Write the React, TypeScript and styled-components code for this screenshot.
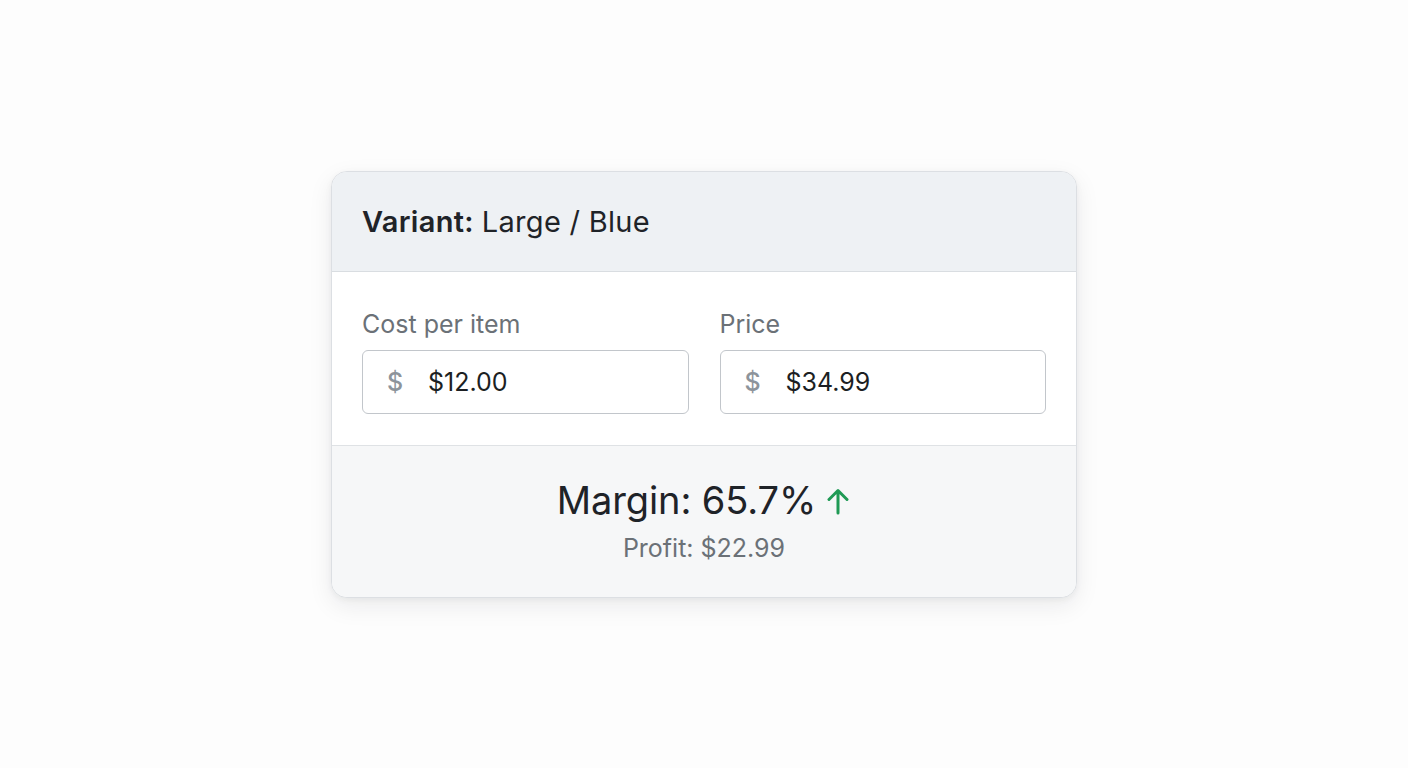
import React from "react";
import styled, { createGlobalStyle } from "styled-components";

const Global = createGlobalStyle`
  html, body { margin: 0; padding: 0; background: #fdfdfd; }
  body { font-family: Inter, "Liberation Sans", Arial, sans-serif; }
`;

const Page = styled.div`
  width: 1408px;
  height: 768px;
  display: flex;
  align-items: center;
  justify-content: center;
`;

const Card = styled.div`
  width: 746px;
  height: 427px;
  box-sizing: border-box;
  border: 1px solid #dcdfe3;
  border-radius: 16px;
  overflow: hidden;
  background: #ffffff;
  box-shadow: 0 8px 24px rgba(20, 30, 40, 0.08), 0 2px 6px rgba(20, 30, 40, 0.05);
  display: flex;
  flex-direction: column;
`;

const Header = styled.div`
  height: 100px;
  box-sizing: border-box;
  background: #eef1f4;
  border-bottom: 1px solid #d9dde1;
  display: flex;
  align-items: center;
  padding: 0 30px;
  font-size: 29px;
  color: #1f2328;
  letter-spacing: 0.3px;
`;

const Bold = styled.span`
  font-weight: 600;
  margin-right: 8px;
`;

const Body = styled.div`
  height: 174px;
  box-sizing: border-box;
  border-bottom: 1px solid #dfe2e5;
  padding: 37px 30px 0;
  display: grid;
  grid-template-columns: 1fr 1fr;
  column-gap: 31px;
`;

const Field = styled.div`
  display: flex;
  flex-direction: column;
`;

const Label = styled.div`
  font-size: 25px;
  color: #6b7177;
  line-height: 30px;
  margin-bottom: 11px;
`;

const InputBox = styled.div`
  height: 64px;
  box-sizing: border-box;
  border: 1.5px solid #c2c6cb;
  border-radius: 6px;
  display: flex;
  align-items: center;
  padding: 0 0 0 24px;
`;

const Prefix = styled.span`
  font-size: 25px;
  color: #8d949b;
  font-weight: 500;
  width: 41px;
`;

const Value = styled.span`
  font-size: 25px;
  color: #1c1f23;
`;

const Footer = styled.div`
  flex: 1;
  background: #f6f7f8;
  display: flex;
  flex-direction: column;
  align-items: center;
  padding-top: 30px;
`;

const MarginLine = styled.div`
  display: flex;
  align-items: center;
  font-size: 38px;
  color: #1f2328;
  letter-spacing: -0.1px;
  line-height: 48px;
`;

const Arrow = styled.svg`
  margin-left: 9px;
  margin-top: 2px;
`;

const Profit = styled.div`
  font-size: 25px;
  color: #6b7177;
  margin-top: 9px;
  line-height: 30px;
`;

export default function App() {
  return (
    <>
      <Global />
      <Page>
        <Card>
          <Header>
            <Bold>Variant:</Bold>Large / Blue
          </Header>
          <Body>
            <Field>
              <Label>Cost per item</Label>
              <InputBox>
                <Prefix>$</Prefix>
                <Value>$12.00</Value>
              </InputBox>
            </Field>
            <Field>
              <Label>Price</Label>
              <InputBox>
                <Prefix>$</Prefix>
                <Value>$34.99</Value>
              </InputBox>
            </Field>
          </Body>
          <Footer>
            <MarginLine>
              Margin: 65.7%
              <Arrow width="26" height="30" viewBox="0 0 26 30" fill="none">
                <path d="M13 27V5M4 13.5L13 4.5L22 13.5" stroke="#1f9a55" strokeWidth="3" strokeLinecap="round" strokeLinejoin="round" />
              </Arrow>
            </MarginLine>
            <Profit>Profit: $22.99</Profit>
          </Footer>
        </Card>
      </Page>
    </>
  );
}
